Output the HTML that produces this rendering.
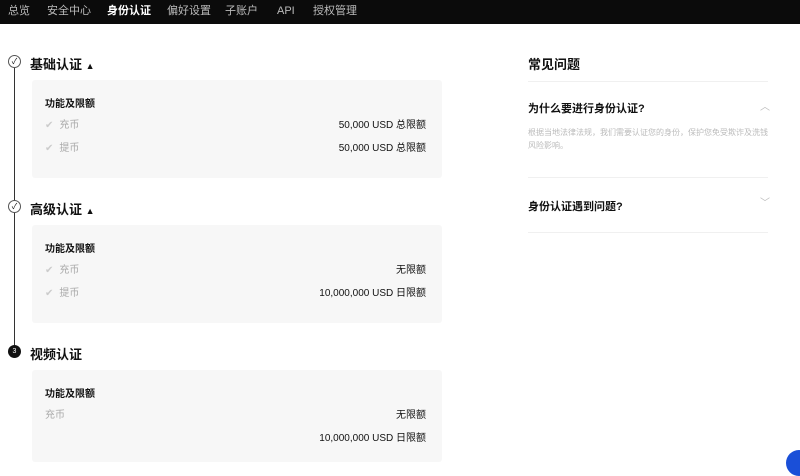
<!DOCTYPE html><html><head><meta charset="utf-8"><style>
*{margin:0;padding:0;box-sizing:border-box}
body{width:800px;height:462px;overflow:hidden;background:#fff;font-family:"Liberation Sans","Noto Sans CJK SC",sans-serif;color:#111;position:relative}
.nav{height:24px;background:#0b0b0b;font-size:11px;color:#bbb;position:relative}
.nav span{position:absolute;top:4px;line-height:14px;height:14px}
.a{position:absolute}
.h{font-size:13px;font-weight:bold}
.card{position:absolute;left:32px;width:410px;background:#f7f7f7;border-radius:3px}
.t{position:absolute;left:13px;font-size:10px;font-weight:bold}
.r{position:absolute;left:13px;right:16px;font-size:10px;display:flex;justify-content:space-between}
.r .l{color:#aaa}
.ck{color:#ccc;margin-right:6px}
.sep{position:absolute;left:528px;width:240px;height:1px;background:#f0f0f0}
</style></head><body>
<div class="nav">
<span style="left:8px">总览</span><span style="left:47px">安全中心</span><span style="left:107px;color:#fff;font-weight:bold">身份认证</span><span style="left:167px">偏好设置</span><span style="left:225px">子账户</span><span style="left:277px">API</span><span style="left:313px">授权管理</span>
</div>
<div class="a" style="left:14px;top:68px;width:1px;height:278px;background:#333"></div>
<div class="a" style="left:8px;top:55px;width:13px;height:13px;border:1px solid #555;border-radius:50%;background:#fff;font-size:8px;text-align:center;line-height:11px">✓</div>
<div class="a" style="left:8px;top:200px;width:13px;height:13px;border:1px solid #555;border-radius:50%;background:#fff;font-size:8px;text-align:center;line-height:11px">✓</div>
<div class="a" style="left:8px;top:345px;width:13px;height:13px;border-radius:50%;background:#111;color:#fff;font-size:7px;text-align:center;line-height:13px">3</div>
<div class="a h" style="left:30px;top:54px">基础认证 <span style="font-size:9px">▲</span></div>
<div class="a h" style="left:30px;top:199px">高级认证 <span style="font-size:9px">▲</span></div>
<div class="a h" style="left:30px;top:344px">视频认证</div>
<div class="card" style="top:80px;height:98px">
<div class="t" style="top:15px">功能及限额</div>
<div class="r" style="top:36px"><span class="l"><span class="ck">✔</span>充币</span><span>50,000 USD 总限额</span></div>
<div class="r" style="top:59px"><span class="l"><span class="ck">✔</span>提币</span><span>50,000 USD 总限额</span></div>
</div>
<div class="card" style="top:225px;height:98px">
<div class="t" style="top:15px">功能及限额</div>
<div class="r" style="top:36px"><span class="l"><span class="ck">✔</span>充币</span><span>无限额</span></div>
<div class="r" style="top:59px"><span class="l"><span class="ck">✔</span>提币</span><span>10,000,000 USD 日限额</span></div>
</div>
<div class="card" style="top:370px;height:92px">
<div class="t" style="top:15px">功能及限额</div>
<div class="r" style="top:36px"><span class="l">充币</span><span>无限额</span></div>
<div class="r" style="top:59px"><span class="l"></span><span>10,000,000 USD 日限额</span></div>
</div>
<div class="a h" style="left:528px;top:54px">常见问题</div>
<div class="sep" style="top:81px"></div>
<div class="a" style="left:528px;top:100px;font-size:11px;font-weight:bold">为什么要进行身份认证?</div>
<div class="a" style="left:760px;top:98px;font-size:10px;color:#bbb">︿</div>
<div class="a" style="left:528px;top:126px;width:244px;font-size:8px;line-height:13px;color:#bbb">根据当地法律法规，我们需要认证您的身份，保护您免受欺诈及洗钱风险影响。</div>
<div class="sep" style="top:177px"></div>
<div class="a" style="left:528px;top:198px;font-size:11px;font-weight:bold">身份认证遇到问题?</div>
<div class="a" style="left:760px;top:194px;font-size:10px;color:#bbb">﹀</div>
<div class="sep" style="top:232px"></div>
<div class="a" style="left:786px;top:450px;width:26px;height:26px;border-radius:50%;background:#1a4fd8"></div>
</body></html>
